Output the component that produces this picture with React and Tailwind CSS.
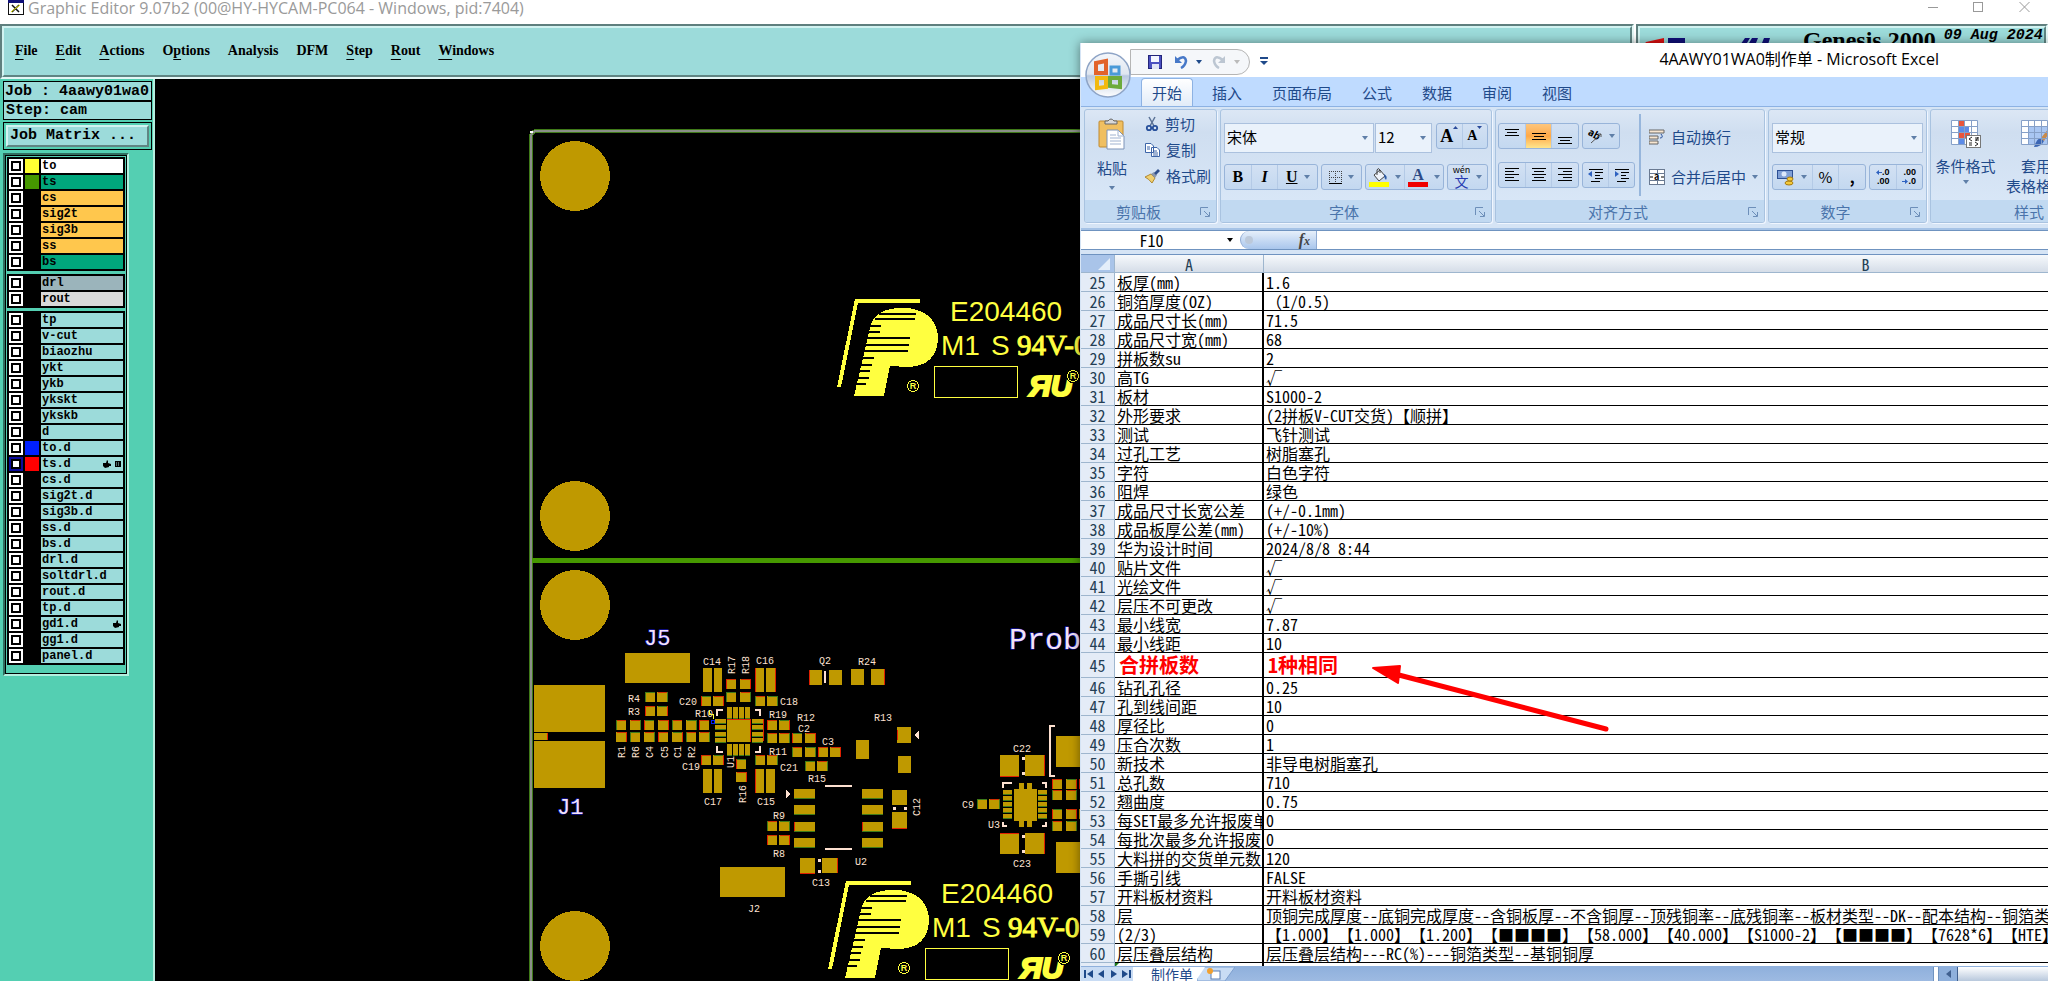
import { useState } from "react";

const TEAL = "bg-[#9cdbda]";

const MENUS = [
  ["", "F", "ile"],
  ["", "E", "dit"],
  ["", "A", "ctions"],
  ["O", "p", "tions"],
  ["Analysis", "", ""],
  ["DFM", "", ""],
  ["", "S", "tep"],
  ["", "R", "out"],
  ["", "W", "indows"],
];

const LAYER_GROUPS = [
  [
    { name: "to", bg: "bg-white", swatch: "bg-[#ffff33]" },
    { name: "ts", bg: "bg-[#00a67c]", swatch: "bg-[#469800]" },
    { name: "cs", bg: "bg-[#ffc74d]" },
    { name: "sig2t", bg: "bg-[#ffc74d]" },
    { name: "sig3b", bg: "bg-[#ffc74d]" },
    { name: "ss", bg: "bg-[#ffc74d]" },
    { name: "bs", bg: "bg-[#00a67c]" },
  ],
  [
    { name: "drl", bg: "bg-[#9bb4bb]" },
    { name: "rout", bg: "bg-[#d9d9d9]" },
  ],
  [
    { name: "tp" },
    { name: "v-cut" },
    { name: "biaozhu" },
    { name: "ykt" },
    { name: "ykb" },
    { name: "ykskt" },
    { name: "ykskb" },
    { name: "d" },
    { name: "to.d", swatch: "bg-[#0020ff]" },
    { name: "ts.d", swatch: "bg-[#ff0000]", active: true, hand: true, grid: true },
    { name: "cs.d" },
    { name: "sig2t.d" },
    { name: "sig3b.d" },
    { name: "ss.d" },
    { name: "bs.d" },
    { name: "drl.d" },
    { name: "soltdrl.d" },
    { name: "rout.d" },
    { name: "tp.d" },
    { name: "gd1.d", hand: true },
    { name: "gg1.d" },
    { name: "panel.d" },
  ],
];

const ROWS = [
  [25, "板厚(mm)", "1.6"],
  [26, "铜箔厚度(OZ)", <><span className="[font-feature-settings:normal]">（</span>1/0.5)</>],
  [27, "成品尺寸长(mm)", "71.5"],
  [28, "成品尺寸宽(mm)", "68"],
  [29, "拼板数su", "2"],
  [30, "高TG", "√"],
  [31, "板材", "S1000-2"],
  [32, "外形要求", "(2拼板V-CUT交货)【顺拼】"],
  [33, "测试", "飞针测试"],
  [34, "过孔工艺", "树脂塞孔"],
  [35, "字符", "白色字符"],
  [36, "阻焊", "绿色"],
  [37, "成品尺寸长宽公差", "(+/-0.1mm)"],
  [38, "成品板厚公差(mm)", "(+/-10%)"],
  [39, "华为设计时间", "2024/8/8 8:44"],
  [40, "贴片文件", "√"],
  [41, "光绘文件", "√"],
  [42, "层压不可更改", "√"],
  [43, "最小线宽", "7.87"],
  [44, "最小线距", "10"],
  [45, "合拼板数", "1种相同"],
  [46, "钻孔孔径", "0.25"],
  [47, "孔到线间距", "10"],
  [48, "厚径比", "0"],
  [49, "压合次数", "1"],
  [50, "新技术", "非导电树脂塞孔"],
  [51, "总孔数", "710"],
  [52, "翘曲度", "0.75"],
  [53, "每SET最多允许报废单元数", "0"],
  [54, "每批次最多允许报废", "0"],
  [55, "大料拼的交货单元数", "120"],
  [56, "手撕引线", "FALSE"],
  [57, "开料板材资料", "开料板材资料"],
  [58, "层", "顶铜完成厚度--底铜完成厚度--含铜板厚--不含铜厚--顶残铜率--底残铜率--板材类型--DK--配本结构--铜箔类型"],
  [59, "(2/3)", "【1.000】【1.000】【1.200】【■■■■】【58.000】【40.000】【S1000-2】【■■■■】【7628*6】【HTE】"],
  [60, "层压叠层结构", "层压叠层结构---RC(%)---铜箔类型--基铜铜厚"],
];

// x, y, width, height
const PADS = [
  [625, 653, 65, 30], [720, 867, 65, 30], [534, 685, 71, 47], [534, 741, 71, 47], [534, 733, 13, 7],
  [703, 668, 9, 24], [714, 668, 8, 24], [755, 668, 9, 24], [766, 668, 9, 24],
  [703, 769, 9, 24], [714, 769, 8, 24], [755, 769, 9, 24], [766, 769, 9, 24],
  [727, 719, 23, 23],
  [809, 670, 13, 15], [829, 670, 13, 15], [851, 669, 13, 16], [871, 669, 13, 16],
  [897, 727, 14, 16], [856, 740, 13, 19], [898, 756, 13, 17],
  [892, 790, 15, 15], [892, 812, 15, 16], [800, 858, 15, 15], [822, 858, 15, 15],
  [1000, 755, 19, 21], [1025, 755, 19, 21], [1000, 833, 19, 21], [1025, 833, 19, 21],
  [1014, 789, 23, 32], [1019, 783, 5, 44], [1027, 783, 5, 44],
  [1056, 736, 30, 31], [1056, 842, 30, 31],
];
const SMALL_PADS = [
  [645, 692], [657, 692], [645, 706], [657, 706],
  [616, 720], [630, 720], [644, 720], [658, 720], [672, 720], [686, 720], [699, 720],
  [616, 732], [630, 732], [644, 732], [658, 732], [672, 732], [686, 732], [699, 732],
  [701, 696], [713, 696], [755, 696], [767, 696],
  [726, 679], [740, 679], [726, 692], [740, 692],
  [767, 720], [779, 720], [767, 733], [779, 733], [792, 733], [805, 733],
  [792, 747], [805, 747], [818, 747], [830, 747], [805, 761], [817, 761],
  [701, 755], [713, 755], [755, 755], [767, 755], [736, 759], [736, 772],
  [767, 821], [779, 821], [767, 835], [779, 835], [977, 799], [989, 799],
  [1052, 779], [1066, 779], [1052, 790], [1066, 790], [1052, 809], [1066, 809], [1052, 821], [1066, 821],
  [1079, 779], [1079, 809],
];
const PINS = [
  ...[727, 733, 739, 745].flatMap((x) => [[x, 707, 5, 11], [x, 744, 5, 11]]),
  ...[719, 725, 732, 738].flatMap((y) => [[715, y, 11, 4], [752, y, 11, 4]]),
  ...[789, 805, 822, 838].flatMap((y) => [[794, y, 21, 9], [862, y, 21, 9]]),
  ...[790, 796, 802, 808, 814].flatMap((y) => [[1003, y, 9, 4], [1038, y, 9, 4]]),
];

// text, x, baseline, rotated
const LABELS = [
  ["C14", 703, 665], ["C16", 756, 664], ["R4", 628, 702], ["R3", 628, 715], ["C20", 679, 705],
  ["C18", 780, 705], ["R10", 695, 717], ["R19", 769, 718], ["R12", 797, 721], ["C2", 798, 732],
  ["C3", 822, 745], ["R11", 769, 755], ["C21", 780, 771], ["R15", 808, 782], ["C19", 682, 770],
  ["C17", 704, 805], ["C15", 757, 805], ["Q2", 819, 664], ["R24", 858, 665], ["R13", 874, 721],
  ["R9", 773, 819], ["R8", 773, 857], ["U2", 855, 865], ["C13", 812, 886], ["J2", 748, 912],
  ["C9", 962, 808], ["U3", 988, 828], ["C22", 1013, 752], ["C23", 1013, 867],
  ["R17", 735, 674, true], ["R18", 749, 674, true], ["R1", 625, 758, true], ["R6", 639, 758, true],
  ["C4", 653, 758, true], ["C5", 668, 758, true], ["C1", 681, 758, true], ["R2", 695, 758, true],
  ["U1", 734, 768, true], ["R16", 746, 803, true], ["C12", 920, 816, true],
];

const STRIPES = [
  [879, 313, 37], [875, 318, 40], [867, 325, 14], [867, 331, 13], [864, 337, 46], [863, 344, 46],
  [861, 350, 47], [861, 357, 13], [859, 364, 13], [857, 370, 13], [856, 377, 13], [854, 383, 12],
];

function Registered({ x, y }) {
  return (
    <g>
      <circle cx={x} cy={y} r="5.5" fill="none" stroke="#ffff40" strokeWidth="1" />
      <text x={x} y={y + 3} fontSize="9" fontWeight="bold" textAnchor="middle">R</text>
    </g>
  );
}

function BoardMark({ x = 0, y = 0, rating }) {
  return (
    <g transform={`translate(${x} ${y})`} fill="#ffff40" className="font-['Liberation_Sans',sans-serif]">
      <path d="M855 299H920V303H858L841 387H837Z" />
      <path d="M854 396L870 328Q874 308 902 308H908Q938 312 938 340Q936 366 908 367L890 366L884 396Z" />
      {STRIPES.map(([sx, sy, w]) => (
        <rect key={sy} x={sx} y={sy} width={w} height="2" fill="#000" />
      ))}
      <Registered x={913} y={386} />
      <text x="950" y="321" fontSize="28">E204460</text>
      <text x="941" y="355" fontSize="28">M1</text>
      <text x="991" y="355" fontSize="28">S</text>
      <text x="1017" y="355" fontSize="29" stroke="#ffff40" className="font-['Liberation_Serif',serif]">{rating}</text>
      <rect x="934" y="366" width="83" height="31" fill="none" stroke="#ffff40" />
      <text x="1029" y="396" fontSize="30" fontWeight="bold" fontStyle="italic" stroke="#ffff40" strokeWidth="2">ЯU</text>
      <circle cx="1073" cy="376" r="7" fill="#000" />
      <Registered x={1073} y={376} />
    </g>
  );
}

function BoardCanvas() {
  return (
    <svg className="block h-full w-full bg-black" aria-label="Board artwork">
      <g transform="translate(-155 -79)" shapeRendering="crispEdges">
        <path d="M2048 131H537Q531 131 531 138V981" fill="none" stroke="#3f7a18" strokeWidth="4" />
        <path d="M2048 131H537Q531 131 531 138V981" fill="none" stroke="#8a8f88" strokeWidth="2" />
        <rect x="530" y="131" width="3" height="2" fill="#fff" />
        <rect x="532" y="558" width="1516" height="5" fill="#469800" />
        {[176, 516, 605, 946].map((cy) => (
          <circle key={cy} cx="575" cy={cy} r="35" fill="#bf9900" />
        ))}
        {PADS.map(([x, y, w, h]) => (
          <rect key={`${x}-${y}`} x={x} y={y} width={w} height={h} fill="#bf9900" />
        ))}
        {PINS.map(([x, y, w, h]) => (
          <g key={`${x}-${y}`}>
            <rect x={x} y={y} width={w} height={h} fill="#bf9900" />
            <path d={`M${x} ${y + h}h${w}`} stroke="#3f7a18" />
          </g>
        ))}
        {SMALL_PADS.map(([x, y], i) => (
          <g key={`${x}-${y}`}>
            <rect x={x} y={y} width="10" height="10" fill="#bf9900" />
            <path d={i % 2 ? `M${x + 10} ${y}v10` : `M${x} ${y}v10`} stroke={i % 4 < 2 ? "#3f7a18" : "#e02000"} />
            <path d={`M${x + 1} ${y}h9`} stroke={i % 3 ? "#d03000" : "#3f7a18"} />
          </g>
        ))}
        <g stroke="#e02000" fill="none">
          <path d="M727 719H750V742M763 719V741M755 668V692M755 769V793M775 668V692M809 670V685M884 669V685" />
          <path d="M547 733V740M1000 776H1019M1044 755V776M1000 833H1019M1044 833V854M800 873H815M837 858V873M897 730V740M794 822V831M862 822V831M892 828H907" />
        </g>
        <g stroke="#fde0d0" fill="none" strokeWidth="2">
          <path d="M717 716V710H723M755 710H760V716M717 746V752H723M755 752H760V746" />
          <path d="M825 671V683M825 786H852M825 849H852M1055 726H1050V776H1055M1003 788V783H1012M1042 783H1046V788M1003 822V826H1007M1042 826H1046V822" />
        </g>
        <path d="M914 735L919 731V739ZM786 790V798L790 794Z" fill="#fde0d0" />
        <g fill="#fde0d0">
          {[[1022, 757], [1022, 772], [1022, 835], [1022, 850], [818, 859], [818, 870], [893, 807], [904, 807]].map(([x, y]) => (
            <rect key={`${x}-${y}`} x={x} y={y} width="3" height="3" />
          ))}
        </g>
        <g fill="#fde0d0" fontSize="10" className="font-['Liberation_Mono',monospace]">
          {LABELS.map(([text, x, y, rotated]) => (
            <text key={text} transform={`translate(${x} ${y})${rotated ? " rotate(-90)" : ""}`}>{text}</text>
          ))}
        </g>
        <g fill="#f4e4f4" stroke="#1a1ad0" strokeWidth="1" paintOrder="stroke" className="font-['Liberation_Mono',monospace]">
          <text x="644" y="645" fontSize="22">J5</text>
          <text x="557" y="814" fontSize="22">J1</text>
          <text x="1009" y="649" fontSize="30">Prob</text>
        </g>
        <path d="M709 710V714H713V719" stroke="#ffff40" fill="none" />
        <rect x="711" y="720" width="3" height="3" fill="none" stroke="#0020ff" />
        <BoardMark rating="94V-0" />
        <BoardMark x={-9} y={582} rating="94V-0" />
      </g>
    </svg>
  );
}

function Hand() {
  return (
    <svg width="8" height="8" viewBox="0 0 8 8" aria-hidden="true">
      <path d="M0 3H3L4 0L5 1V3L8 4V6H6V7L2 8L0 6Z" />
    </svg>
  );
}

function LayerRow({ layer }) {
  const [checked, setChecked] = useState(false);
  return (
    <label className="flex h-4 items-center gap-0.5 border-b-2 border-black">
      <input
        type="checkbox"
        checked={checked}
        onChange={() => setChecked(!checked)}
        className={`h-[14px] w-[14px] shrink-0 appearance-none border-2 bg-white shadow-[inset_0_0_0_2px_black] ${layer.active ? "border-[#0b0b9c]" : "border-white"}`}
      />
      <span className={`h-[14px] w-[14px] shrink-0 ${layer.swatch || "bg-black"}`} />
      <span className={`flex h-[14px] flex-1 items-center justify-end gap-1 pr-0.5 pl-px text-xs leading-[14px] font-bold ${layer.bg || TEAL}`}>
        <span className="flex-1">{layer.name}</span>
        {layer.hand && <Hand />}
        {layer.grid && (
          <svg width="6" height="6" aria-hidden="true">
            <rect width="6" height="6" />
            <path d="M1 2H5M1 4H5" stroke="#9cdbda" strokeDasharray="1 1" />
          </svg>
        )}
      </span>
    </label>
  );
}

function LayerPanel() {
  return (
    <aside className="w-[155px] shrink-0 border-r-2 border-[#b4f0e0] bg-[#54cfb2] pt-0.5 pl-[3px] font-['Liberation_Mono',monospace] text-black">
      <div className="mr-px text-[15px] font-bold">
        <div className={`h-5 border border-black pt-px pl-px leading-[18px] whitespace-nowrap ${TEAL}`}>Job : 4aawy01wa0</div>
        <div className={`h-[19px] border border-black pl-0.5 leading-[18px] whitespace-nowrap ${TEAL}`}>Step: cam</div>
        <div className="mt-0.5 h-7 border border-black p-0.5">
          <button className={`block h-full w-full border-2 border-t-[#d2f3f1] border-r-[#5f8583] border-b-[#5f8583] border-l-[#d2f3f1] pl-0.5 text-left leading-[18px] ${TEAL}`}>
            Job Matrix ...
          </button>
        </div>
      </div>
      <div className="mt-[3px] mr-6 border-t-2 border-r-2 border-b-2 border-l-2 border-t-[#2f6f60] border-r-[#b4f0e0] border-b-[#b4f0e0] border-l-[#2f6f60]">
        <div className="flex flex-col gap-[3px] border border-black p-px pb-2">
          {LAYER_GROUPS.map((group) => (
            <div key={group[0].name} className="border-t-2 border-r-2 border-l-2 border-black bg-black">
              {group.map((layer) => (
                <LayerRow key={layer.name} layer={layer} />
              ))}
            </div>
          ))}
        </div>
      </div>
    </aside>
  );
}

function Bevel({ className, children }) {
  return (
    <div className={`border-2 border-t-[#5f7f7e] border-r-[#e4f7f6] border-b-[#e4f7f6] border-l-[#5f7f7e] ${className}`}>
      <div className={`h-full border-2 border-t-[#d2f3f1] border-r-[#5f8583] border-b-[#5f8583] border-l-[#d2f3f1] ${TEAL}`}>{children}</div>
    </div>
  );
}

function EditorHeader() {
  return (
    <>
      <div className="flex h-6 shrink-0 items-start bg-white font-['Open_Sans',sans-serif] text-base leading-4 text-[#9a9a9a]">
        <svg className="ml-2 h-[15px] w-4 shrink-0" viewBox="0 0 16 15" aria-hidden="true">
          <rect x="0.5" y="0.5" width="15" height="14" fill="#fff" stroke="#111" />
          <rect width="16" height="3" fill="#10107a" />
          <path d="M4 5L11 12M11 5L4 12" stroke="#111" strokeWidth="1.5" />
          <path d="M3 12L8 8L12 5" stroke="#e6e600" fill="none" />
        </svg>
        <h1 className="ml-1 flex-1 whitespace-nowrap">Graphic Editor 9.07b2 (00@HY-HYCAM-PC064 - Windows, pid:7404)</h1>
        <div className="flex pr-[18px]">
          <button aria-label="Minimize" className="mr-[35px]">
            <svg width="10" height="14"><path d="M0 7.5H10" stroke="#999" /></svg>
          </button>
          <button aria-label="Maximize" className="mr-9">
            <svg width="10" height="14"><rect x="0.5" y="2.5" width="9" height="9" fill="none" stroke="#999" /></svg>
          </button>
          <button aria-label="Close">
            <svg width="11" height="14"><path d="M0.5 2L10.5 12M10.5 2L0.5 12" stroke="#999" /></svg>
          </button>
        </div>
      </div>
      <header className="flex h-[55px] shrink-0 bg-white">
        <Bevel className="flex-1">
          <nav className="flex h-full items-center gap-[18px] pb-[3px] pl-[11px] font-['Liberation_Serif',serif] text-[14px] font-bold text-black">
            {MENUS.map(([before, key, after]) => (
              <button key={before + key + after}>
                {before}
                <span className="underline underline-offset-4">{key}</span>
                {after}
              </button>
            ))}
          </nav>
        </Bevel>
        <Bevel className="ml-0.5 w-[412px]">
          <div className="flex items-start text-black">
            <svg width="163" height="40" className="shrink-0" aria-hidden="true">
              <path d="M6 14L24 10V20H2Z" fill="#e01010" />
              <path d="M28 10H45V20H28ZM105 10H110L104 20H98ZM112 10H118L114 20H106ZM124 10H130L127 20H120Z" fill="#10107a" />
            </svg>
            <span className="font-['Liberation_Serif',serif] text-2xl leading-6 font-bold whitespace-nowrap">Genesis 2000</span>
            <time className="ml-2 font-['Liberation_Mono',monospace] text-[15px] leading-4 font-bold whitespace-nowrap italic">09 Aug 2024</time>
          </div>
        </Bevel>
      </header>
    </>
  );
}

function Caret({ className = "fill-[#5f7fa8]" }) {
  return (
    <svg width="6" height="4" viewBox="0 0 6 4" className={`shrink-0 ${className}`} aria-hidden="true">
      <path d="M0 0H6L3 4Z" />
    </svg>
  );
}

function Combo({ label, value, width }) {
  return (
    <div className={`relative ${width}`}>
      <select aria-label={label} defaultValue={value} className="h-[30px] w-full appearance-none border border-[#abc1de] bg-[#eaf2fb] pb-0.5 pl-0.5 text-[15px] text-black">
        <option>{value}</option>
      </select>
      <span className="pointer-events-none absolute top-[13px] right-1.5">
        <Caret />
      </span>
    </div>
  );
}

function ButtonBox({ className, children }) {
  return (
    <div className={`flex h-[26px] divide-x divide-[#b4cae6] rounded-[3px] border border-[#98b4d9] bg-gradient-to-b from-[#d3e1f3] to-[#c3d8f0] text-black ${className}`}>
      {children}
    </div>
  );
}

function IconButton({ label, className = "", children }) {
  return (
    <button aria-label={label} className={`flex flex-1 items-center justify-center gap-1.5 ${className}`}>
      {children}
    </button>
  );
}

// each line is [x, width], 3px apart
function Lines({ lines, top = 1 }) {
  return (
    <svg width="16" height="16" aria-hidden="true">
      {lines.map(([x, w], i) => (
        <rect key={i} x={x} y={top + i * 3} width={w} height="1" />
      ))}
    </svg>
  );
}

function Group({ title, launcher = true, className, children }) {
  return (
    <section className={`flex shrink-0 flex-col rounded-[3px] border border-[#a9c3e0] bg-gradient-to-b from-[#dce7f5] via-[#cfdef0] via-20% to-[#dbe9f9] shadow-[1px_1px_0_#f0f6ff] ${className}`}>
      <div className="h-[92px]">{children}</div>
      <div className="flex h-[22px] items-center rounded-b-[2px] bg-[#c1d9f1] pt-0.5 text-[15px] leading-5 text-[#4a74ab]">
        <h2 className={`flex-1 text-center ${launcher ? "pr-2" : ""}`}>{title}</h2>
        {launcher && (
          <button aria-label={`${title}选项`} className="mr-[5px]">
            <svg width="11" height="11" fill="none" stroke="#6d8fb9" aria-hidden="true">
              <path d="M0.5 8V0.5H8M4 4L9 9M9.5 5V9.5H5" />
            </svg>
          </button>
        )}
      </div>
    </section>
  );
}

function ClipboardGroup() {
  return (
    <Group title="剪贴板" className="w-[133px]">
      <div className="flex h-full text-[#1f4a8a]">
        <button className="flex w-[54px] flex-col items-center pt-2">
          <svg width="28" height="32" viewBox="0 0 28 32" aria-hidden="true">
            <rect x="1" y="3" width="24" height="26" rx="1" fill="#f0bf60" stroke="#c08a30" />
            <path d="M7 6V3H10Q13 -1 16 3H19V6Z" fill="#d8d8d8" stroke="#666" />
            <path d="M9 12H20L26 18V31H9Z" fill="#fff" stroke="#7d93b8" />
            <path d="M20 12V18H26M12 17H18M12 20H23M12 23H23M12 26H23" stroke="#9fb2d0" fill="none" />
          </svg>
          <span className="mt-2 leading-5">粘贴</span>
          <span className="mt-2"><Caret /></span>
        </button>
        <div className="flex flex-col gap-1.5 pt-1 pl-1.5">
          <button className="flex h-5 items-center gap-1.5">
            <svg width="14" height="16" viewBox="0 0 14 16" fill="none" aria-hidden="true">
              <path d="M4 1L9 10M10 1L5 10" stroke="#5b7296" strokeWidth="1.5" />
              <circle cx="4" cy="12" r="2.2" stroke="#27509b" strokeWidth="1.8" />
              <circle cx="10" cy="12" r="2.2" stroke="#27509b" strokeWidth="1.8" />
            </svg>
            剪切
          </button>
          <button className="flex h-5 items-center gap-1.5">
            <svg width="15" height="14" viewBox="0 0 15 14" fill="#fff" stroke="#3d65a8" aria-hidden="true">
              <path d="M0.5 0.5H6L8.5 3V9.5H0.5ZM6.5 4.5H12L14.5 7V13.5H6.5Z" />
              <path d="M2 4H5M2 6H5M8 8H12M8 10H13M8 12H13" />
            </svg>
            复制
          </button>
          <button className="flex h-5 items-center gap-1.5">
            <svg width="15" height="15" viewBox="0 0 15 15" aria-hidden="true">
              <path d="M0 8L6 5L10 9L7 14Q4 10 0 8Z" fill="#f0d070" stroke="#b08830" />
              <path d="M6 5L9 3L12 6L10 9Z" fill="#8a98ae" />
              <path d="M9 4L13 0L15 2L11 6Z" fill="#30508c" />
            </svg>
            格式刷
          </button>
        </div>
      </div>
    </Group>
  );
}

function FontGroup() {
  return (
    <Group title="字体" className="w-[272px]">
      <div className="flex flex-col gap-[11px] px-[3px] pt-[13px]">
        <div className="flex">
          <Combo label="字体" value="宋体" width="w-[150px]" />
          <Combo label="字号" value="12" width="ml-px w-[57px]" />
          <ButtonBox className="ml-1 w-[52px] font-['Liberation_Serif',serif] font-bold text-[#222f45]">
            <IconButton label="增大字号">
              <span className="flex items-start text-lg leading-5">A<svg width="5" height="3"><path d="M0 3H5L2.5 0Z" fill="#2a4a9a" /></svg></span>
            </IconButton>
            <IconButton label="减小字号">
              <span className="flex items-start text-sm leading-5">A<svg width="5" height="3"><path d="M0 0H5L2.5 3Z" fill="#2a4a9a" /></svg></span>
            </IconButton>
          </ButtonBox>
        </div>
        <div className="flex gap-[3px]">
          <ButtonBox className="w-[94px] font-['Liberation_Serif',serif] text-base font-bold">
            <IconButton label="加粗">B</IconButton>
            <IconButton label="倾斜" className="italic">I</IconButton>
            <IconButton label="下划线" className="grow-[1.5]"><span className="underline">U</span><Caret /></IconButton>
          </ButtonBox>
          <ButtonBox className="w-[41px]">
            <IconButton label="边框">
              <svg width="13" height="13" aria-hidden="true">
                <path d="M0.5 0V12M6.5 0V12M12.5 0V12M0 0.5H13M0 6.5H13" stroke="#444" strokeDasharray="1 1" />
                <path d="M0 12.5H13" stroke="#000" />
              </svg>
              <Caret />
            </IconButton>
          </ButtonBox>
          <ButtonBox className="w-[79px]">
            <IconButton label="填充颜色">
              <svg width="20" height="20" aria-hidden="true">
                <path d="M5 8L11 3L16 9L10 14Z" fill="#eef3fa" stroke="#444" />
                <path d="M8 8V3Q9 0 11 3V6" fill="none" stroke="#444" />
                <path d="M15 7Q19 9 17 13Q15 11 15 7Z" fill="#2a5aa8" />
                <rect y="15" width="20" height="5" fill="#ff0" />
              </svg>
              <Caret />
            </IconButton>
            <IconButton label="字体颜色">
              <span className="flex flex-col items-center font-['Liberation_Serif',serif] text-base leading-[15px] font-bold text-[#2c4a86]">
                A<span className="h-[5px] w-5 bg-[#f00000]" />
              </span>
              <Caret />
            </IconButton>
          </ButtonBox>
          <ButtonBox className="w-[41px]">
            <IconButton label="拼音">
              <span className="flex flex-col items-center text-[9px] leading-[8px]">
                wén<span className="text-[14px] leading-[14px] text-[#2638b0]">文</span>
              </span>
              <Caret />
            </IconButton>
          </ButtonBox>
        </div>
      </div>
    </Group>
  );
}

function AlignGroup() {
  return (
    <Group title="对齐方式" className="w-[270px]">
      <div className="flex h-full">
        <div className="flex w-[143px] flex-col gap-[13px] pt-[13px] pl-0.5">
          <div className="flex gap-[3px]">
            <ButtonBox className="w-[81px]">
              <IconButton label="顶端对齐"><Lines lines={[[1, 14], [3, 10], [1, 14]]} /></IconButton>
              <IconButton label="垂直居中" className="bg-gradient-to-b from-[#fdc67c] via-[#ffa947] to-[#ffe58c]"><Lines lines={[[1, 14], [3, 10], [1, 14]]} top={5} /></IconButton>
              <IconButton label="底端对齐"><Lines lines={[[1, 14], [3, 10], [1, 14]]} top={9} /></IconButton>
            </ButtonBox>
            <ButtonBox className="w-[38px]">
              <IconButton label="方向">
                <svg width="16" height="16" aria-hidden="true">
                  <text x="0" y="9" fontSize="10" fontWeight="bold" transform="rotate(30 5 8)">ab</text>
                  <path d="M4 15L14 6M14 6H11M14 6V9" stroke="#555" fill="none" />
                </svg>
                <Caret />
              </IconButton>
            </ButtonBox>
          </div>
          <div className="flex gap-[3px]">
            <ButtonBox className="w-[81px]">
              <IconButton label="左对齐"><Lines lines={[[1, 14], [1, 9], [1, 14], [1, 9], [1, 14]]} /></IconButton>
              <IconButton label="居中"><Lines lines={[[1, 14], [3, 10], [1, 14], [3, 10], [1, 14]]} /></IconButton>
              <IconButton label="右对齐"><Lines lines={[[1, 14], [6, 9], [1, 14], [6, 9], [1, 14]]} /></IconButton>
            </ButtonBox>
            <ButtonBox className="w-[53px]">
              <IconButton label="减少缩进">
                <svg width="16" height="16" aria-hidden="true">
                  <path d="M1 2.5H15M7 5.5H15M7 8.5H12M7 11.5H15M3 14.5H12" stroke="#000" />
                  <path d="M0 7L4 4V10Z" fill="#2f62c0" />
                </svg>
              </IconButton>
              <IconButton label="增加缩进">
                <svg width="16" height="16" aria-hidden="true">
                  <path d="M1 2.5H15M7 5.5H15M7 8.5H12M7 11.5H15M3 14.5H12" stroke="#000" />
                  <path d="M5 7L1 4V10Z" fill="#2f62c0" />
                </svg>
              </IconButton>
            </ButtonBox>
          </div>
        </div>
        <div className="mt-1 h-[82px] w-0.5 bg-[#97b6dc]" />
        <div className="flex flex-col gap-5 pt-[17px] pl-2 text-[15px] text-[#1f4a8a]">
          <button className="flex h-5 items-center gap-1.5">
            <svg width="16" height="16" aria-hidden="true">
              <path d="M0 1H15V4H0ZM0 7H9V10H0ZM0 12H9V15H0Z" fill="#f8e6d0" stroke="#666" />
              <path d="M12 5Q15 9 11 9" stroke="#27509b" fill="none" />
            </svg>
            自动换行
          </button>
          <button className="flex h-5 items-center gap-1.5">
            <svg width="16" height="16" aria-hidden="true">
              <rect x="0.5" y="0.5" width="15" height="15" fill="#fff" stroke="#6a7a92" />
              <path d="M0 4.5H16M0 11.5H16M8.5 0V4M8.5 12V16" stroke="#6a7a92" />
              <text x="5" y="11" fontSize="9" fontWeight="bold">a</text>
              <path d="M1 8H4M12 8H15" stroke="#000" />
            </svg>
            合并后居中 <Caret />
          </button>
        </div>
      </div>
    </Group>
  );
}

function NumberGroup() {
  return (
    <Group title="数字" className="w-[159px]">
      <div className="flex flex-col gap-[11px] px-[3px] pt-[13px]">
        <Combo label="数字格式" value="常规" width="w-[151px]" />
        <div className="flex gap-[3px]">
          <ButtonBox className="w-[94px] text-[15px]">
            <IconButton label="会计格式" className="grow-[1.5]">
              <svg width="18" height="17" aria-hidden="true">
                <rect x="0.5" y="1.5" width="15" height="8" fill="#7f9fd6" stroke="#2c4f94" />
                <circle cx="7" cy="5" r="2.5" fill="#dce8fb" />
                <ellipse cx="12" cy="14" rx="4" ry="2" fill="#f3c93a" stroke="#a67a10" />
                <ellipse cx="13" cy="10" rx="3" ry="2" fill="#f3c93a" stroke="#a67a10" />
              </svg>
              <Caret />
            </IconButton>
            <IconButton label="百分比">%</IconButton>
            <IconButton label="千位分隔"><span className="font-bold">,</span></IconButton>
          </ButtonBox>
          <ButtonBox className="w-[54px] font-['Liberation_Sans',sans-serif] text-[9px] leading-[9px] font-bold">
            <IconButton label="增加小数位数">
              <span className="flex flex-col items-end">
                <span className="flex items-center">
                  <svg width="6" height="5" aria-hidden="true"><path d="M0 2.5L3 0V2H6V3H3V5Z" fill="#2f62c0" /></svg>.0
                </span>
                <span>.00</span>
              </span>
            </IconButton>
            <IconButton label="减少小数位数">
              <span className="flex flex-col items-end">
                <span>.00</span>
                <span className="flex items-center">
                  <svg width="6" height="5" aria-hidden="true"><path d="M6 2.5L3 0V2H0V3H3V5Z" fill="#2f62c0" /></svg>.0
                </span>
              </span>
            </IconButton>
          </ButtonBox>
        </div>
      </div>
    </Group>
  );
}

function GridIcon({ children }) {
  return (
    <svg width="30" height="28" viewBox="0 0 30 28" aria-hidden="true">
      <rect x="0.5" y="0.5" width="26" height="24" fill="#fff" />
      {children}
      <path d="M0.5 0.5H26.5V24.5H0.5ZM0 6.5H27M0 12.5H27M0 18.5H27M7.5 0V25M13.5 0V25M20.5 0V25" fill="none" stroke="#86a0c8" />
    </svg>
  );
}

function StyleGroup() {
  return (
    <Group title="样式" launcher={false} className="w-[198px]">
      <div className="flex text-[15px] leading-5 text-[#1f4a8a]">
        <button className="flex w-[69px] flex-col items-center pt-2.5">
          <span className="relative">
            <GridIcon>
              <path d="M7 0H13V6H7ZM7 12H19V18H7Z" fill="#e8553c" />
              <path d="M7 6H18V12H7ZM7 18H13V24H7Z" fill="#5c8be8" />
            </GridIcon>
            <svg width="15" height="13" className="absolute right-0 bottom-0" fill="none" stroke="#222" aria-hidden="true">
              <rect x="0.5" y="0.5" width="14" height="12" fill="#fff" stroke="#777" />
              <path d="M6 2L3 4L6 6M3 8H6M3 10H6M9 3H13M9 5H13M12 2L10 6M9 7L12 9L9 11" />
            </svg>
          </span>
          <span className="mt-2 whitespace-nowrap">条件格式</span>
          <span className="mt-1"><Caret /></span>
        </button>
        <button className="flex w-[72px] flex-col items-center pt-2.5 whitespace-nowrap">
          <GridIcon>
            <path d="M7 6H27V24H7Z" fill="#a9c6f2" />
            <path d="M13 27Q16 18 20 18L23 21Q20 27 13 27Z" fill="#3c66b4" />
            <path d="M20 18L28 8L30 10L23 21Z" fill="#c88a4c" />
          </GridIcon>
          <span className="mt-2">套用</span>
          <span>表格格式</span>
        </button>
      </div>
    </Group>
  );
}

const TABS = ["开始", "插入", "页面布局", "公式", "数据", "审阅", "视图"];

function ExcelTop() {
  return (
    <div className="relative shrink-0">
      <div className="flex h-[34px] items-start bg-white pt-1.5 pl-[49px]">
        <div className="flex h-[26px] w-[120px] items-center rounded-r-full border border-[#b5b5b5] bg-[#f5f7fa] pl-[17px]">
          <button aria-label="保存">
            <svg width="14" height="14" aria-hidden="true">
              <rect x="0.5" y="0.5" width="13" height="13" fill="#4a4fc0" stroke="#23257a" />
              <rect x="3" y="1" width="8" height="6" fill="#f4f6ff" />
              <rect x="4" y="9" width="7" height="5" fill="#dfe3f5" />
            </svg>
          </button>
          <button aria-label="撤消" className="ml-3 flex items-center gap-2">
            <svg width="14" height="14" fill="none" aria-hidden="true">
              <path d="M3 5Q11 -1 12 6Q11 11 7 13" stroke="#4778c8" strokeWidth="2.5" />
              <path d="M1 1V8H8Z" fill="#4778c8" />
            </svg>
            <Caret className="fill-[#1f4a8a]" />
          </button>
          <button aria-label="恢复" className="ml-2.5 flex items-center gap-2">
            <svg width="14" height="14" fill="none" aria-hidden="true">
              <path d="M11 5Q3 -1 2 6Q3 11 7 13" stroke="#bcc6d2" strokeWidth="2.5" />
              <path d="M13 1V8H6Z" fill="#bcc6d2" />
            </svg>
            <Caret className="fill-[#bbb]" />
          </button>
        </div>
        <button aria-label="自定义快速访问工具栏" className="mt-2 ml-2.5">
          <svg width="9" height="9" aria-hidden="true">
            <path d="M0 0H8V2H0ZM0 4H8L4 8Z" fill="#1f4a8a" />
          </svg>
        </button>
        <h1 className="mr-[109px] ml-auto font-['Open_Sans','Noto_Sans_CJK_SC',sans-serif] text-base leading-5 whitespace-nowrap text-black">4AAWY01WA0制作单 - Microsoft Excel</h1>
      </div>
      <nav className="flex h-[30px] items-end border-b border-[#8db2e3] bg-[#bfdbff] pl-14 text-[15px] text-[#1f4a8a]">
        {TABS.map((tab, i) => (
          <button
            key={tab}
            className={`mx-1 h-[28px] border-x border-t px-2.5 leading-6 ${i === 0 ? "rounded-t-[4px] border-[#8db2e3] bg-gradient-to-b from-white to-[#e2ecf8]" : "border-transparent"}`}
          >
            {tab}
          </button>
        ))}
      </nav>
      <button aria-label="Office 按钮" className="absolute top-2 left-[3px]">
        <svg width="48" height="48" viewBox="0 0 48 48" aria-hidden="true">
          <defs>
            <linearGradient id="orb" x1="0" y1="0" x2="0" y2="1">
              <stop offset="0" stopColor="#f4f7fb" />
              <stop offset="0.48" stopColor="#dfe6f0" />
              <stop offset="0.52" stopColor="#b9c9e0" />
              <stop offset="1" stopColor="#fff" />
            </linearGradient>
          </defs>
          <circle cx="24" cy="24" r="22" fill="url(#orb)" stroke="#8ea4c6" strokeWidth="1.5" />
          <g fill="none" strokeWidth="4">
            <path d="M12 12L22 10V22H12Z" stroke="#e2632a" />
            <path d="M27 16H35V23H27Z" stroke="#4a9ad8" strokeWidth="3" />
            <path d="M13 27H22V36L13 37Z" stroke="#f2b90f" />
            <path d="M26 27H36V36L26 35Z" stroke="#6dab3c" />
          </g>
        </svg>
      </button>
      <div className="flex h-[123px] gap-[3px] overflow-hidden border-b-2 border-[#a6c3e6] bg-[#d5e4f5] pt-0.5 pb-[5px] pl-[3px] text-[15px]">
        <ClipboardGroup />
        <FontGroup />
        <AlignGroup />
        <NumberGroup />
        <StyleGroup />
      </div>
    </div>
  );
}

function FormulaBar() {
  return (
    <div className="flex h-[20px] shrink-0 border-y border-[#6f93c0] bg-white">
      <input
        aria-label="名称框"
        defaultValue="F10"
        className="w-[141px] text-center font-['Noto_Sans_CJK_SC',sans-serif] text-base leading-4 text-black [font-feature-settings:'hwid']"
      />
      <div className="flex w-[16px] items-center justify-center"><Caret className="fill-black" /></div>
      <div className="ml-0.5 flex w-[77px] items-center justify-between rounded-l-full border-r border-l border-[#8fabd4] bg-gradient-to-b from-[#e6effa] to-[#a9c6ec] pr-1.5 pl-1">
        <span className="h-2 w-2 rounded-full bg-[#bcc9da]" />
        <button aria-label="插入函数" className="font-['Liberation_Serif',serif] text-base leading-4 font-bold text-[#444] italic">
          f<span className="text-xs">x</span>
        </button>
      </div>
      <input aria-label="编辑栏" className="min-w-0 flex-1" />
    </div>
  );
}

function Sheet() {
  return (
    <div className="relative mt-1 min-h-0 flex-1 overflow-hidden border-t border-[#6f93c0] bg-white">
      <table className="w-[1386px] table-fixed border-separate border-spacing-0 font-['Noto_Sans_CJK_SC',sans-serif] text-base text-black [font-feature-settings:'hwid']">
        <colgroup>
          <col className="w-[34px]" />
          <col className="w-[149px]" />
          <col />
        </colgroup>
        <thead>
          <tr className="text-[#243f55]">
            <td className="h-[18px] border-r border-b border-[#9eb6ce] bg-[#a9c4e9] p-0">
              <svg width="12" height="12" className="mr-1 ml-auto block" aria-hidden="true">
                <path d="M12 0V12H0Z" fill="#e4eefa" />
              </svg>
            </td>
            <th scope="col" className="border-r border-b border-[#9eb6ce] bg-gradient-to-b from-[#f6f9fc] to-[#d5dde8] p-0 leading-4 font-normal">A</th>
            <th scope="col" className="border-b border-[#9eb6ce] bg-gradient-to-b from-[#f6f9fc] to-[#d5dde8] p-0 leading-4 font-normal">B</th>
          </tr>
        </thead>
        <tbody>
          {ROWS.map(([n, name, value]) => (
            <tr key={n} className={n === 45 ? "text-xl leading-6 font-bold text-[#ff0000]" : "leading-[18px]"}>
              <th scope="row" className="border-r border-b border-[#9eb6ce] bg-[#e4ecf7] p-0 text-base leading-[18px] font-normal text-[#243f55]">{n}</th>
              <td className={`overflow-hidden border-r-2 border-b border-black py-0 pr-0 whitespace-nowrap ${n === 45 ? "pl-1" : "pl-0.5"}`}>{name}</td>
              <td className={`border-b border-black py-0 pr-0 whitespace-nowrap ${n === 45 ? "pl-1" : "pl-0.5"}`}>{value}</td>
            </tr>
          ))}
          <tr className="h-[19px]">
            <th scope="row" className="border-r border-[#9eb6ce] bg-[#e4ecf7] p-0" aria-label="61" />
            <td className="border-r-2 border-black p-0 align-top">
              <svg width="4" height="4" className="block" aria-hidden="true"><path d="M0 0H4L0 4Z" fill="#1a7a1a" /></svg>
            </td>
            <td />
          </tr>
        </tbody>
      </table>
      <svg className="pointer-events-none absolute top-[405px] left-[290px]" width="244" height="76" aria-hidden="true">
        <path d="M24 14L235 69" stroke="#f00" strokeWidth="5" strokeLinecap="round" />
        <path d="M2 8L29 6L27 23Z" fill="#f00" stroke="#f00" strokeWidth="2" strokeLinejoin="round" />
      </svg>
    </div>
  );
}

function SheetTabs() {
  const arrows = ["M2 0H4V8H2ZM11 0V8L5 4Z", "M9 0V8L3 4Z", "M3 0V8L9 4Z", "M1 0V8L7 4ZM8 0H10V8H8Z"];
  return (
    <div className="flex h-[15px] shrink-0 overflow-hidden border-t border-[#8fb0dc] bg-gradient-to-b from-[#8fb0dc] to-[#9dbae2]">
      <div className="flex w-[52px] items-center justify-around bg-[#c9dcf4]">
        {arrows.map((d) => (
          <button key={d} aria-label="滚动工作表">
            <svg width="11" height="8" fill="#1f4a8a" aria-hidden="true"><path d={d} /></svg>
          </button>
        ))}
      </div>
      <button className="w-[64px] bg-white pr-1 text-right text-sm leading-[15px] text-[#1f4a8a]">制作单</button>
      <button aria-label="插入工作表">
        <svg width="38" height="14" className="block" aria-hidden="true">
          <path d="M0 0H38L28 14H0Z" fill="#c9dcf4" stroke="#7d9fce" />
          <path d="M0 0H8L0 12Z" fill="#fff" />
          <rect x="14" y="4" width="9" height="8" fill="#fff" stroke="#5a7cb0" />
          <circle cx="13" cy="4" r="3" fill="#f0a030" />
        </svg>
      </button>
      <div className="ml-auto flex w-[115px]">
        <span className="w-1.5 border-x border-[#6f93c0] bg-white" />
        <button aria-label="向左滚动" className="flex w-[18px] items-center justify-center bg-[#8fb0dc]">
          <svg width="5" height="8" aria-hidden="true"><path d="M5 0V8L0 4Z" fill="#41608f" /></svg>
        </button>
        <span className="flex-1 border-l border-[#41608f] bg-gradient-to-b from-white to-[#b8c8dc]" />
      </div>
    </div>
  );
}

function ExcelWindow() {
  return (
    <div className="absolute top-[43px] right-0 bottom-0 left-[1080px] flex flex-col overflow-hidden bg-[#d5e4f5] pl-px font-['Noto_Sans_CJK_SC',sans-serif] shadow-[0_0_10px_rgba(0,0,0,0.45)]">
      <ExcelTop />
      <FormulaBar />
      <Sheet />
      <SheetTabs />
    </div>
  );
}

export default function App() {
  return (
    <div className="relative flex h-screen flex-col overflow-hidden bg-black">
      <EditorHeader />
      <main className="flex min-h-0 flex-1">
        <LayerPanel />
        <div className="min-w-0 flex-1">
          <BoardCanvas />
        </div>
      </main>
      <ExcelWindow />
    </div>
  );
}
